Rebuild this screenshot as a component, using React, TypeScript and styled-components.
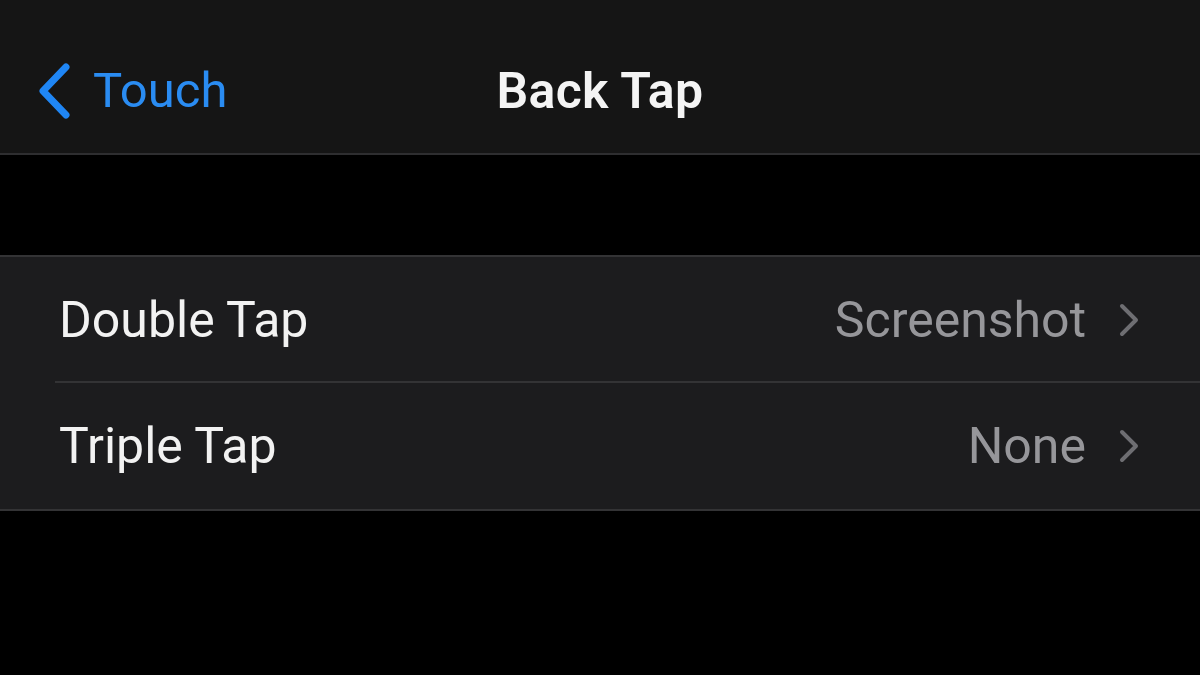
import React from "react";
import styled, { createGlobalStyle } from "styled-components";

const Global = createGlobalStyle`
  html, body { margin: 0; padding: 0; background: #000; }
  body { font-family: Roboto, "Liberation Sans", sans-serif; -webkit-font-smoothing: antialiased; }
`;

const Screen = styled.div`
  width: 1200px;
  height: 675px;
  background: #000;
  display: flex;
  flex-direction: column;
  overflow: hidden;
`;

const NavBar = styled.header`
  height: 155px;
  background: #151515;
  border-bottom: 2px solid #2e2e30;
  display: grid;
  grid-template-columns: 1fr auto 1fr;
  align-items: center;
  padding-top: 28px;
  box-sizing: border-box;
`;

const BackButton = styled.div`
  display: flex;
  align-items: center;
  gap: 22px;
  padding-left: 37px;
  color: #2a8cf2;
  font-size: 49px;
  font-weight: 400;
`;

const Title = styled.h1`
  margin: 0;
  color: #f4f4f4;
  font-size: 50px;
  font-weight: 600;
  letter-spacing: 0.3px;
`;

const Gap = styled.div`
  height: 100px;
  background: #000;
`;

const Group = styled.section`
  background: #1c1c1e;
  border-top: 2px solid #333335;
  border-bottom: 2px solid #333335;
`;

const Row = styled.div<{ $last?: boolean }>`
  height: 126px;
  display: flex;
  align-items: center;
  padding-left: 59px;
  padding-right: 60px;
  position: relative;
  box-sizing: border-box;
  ${(p) =>
    !p.$last &&
    `&::after {
      content: "";
      position: absolute;
      left: 55px;
      right: 0;
      bottom: 0;
      height: 2px;
      background: #333335;
    }`}
`;

const Label = styled.span`
  flex: 1;
  color: #f2f2f2;
  font-size: 50px;
  font-weight: 400;
`;

const Value = styled.span`
  color: #96969a;
  font-size: 50px;
  font-weight: 400;
  margin-right: 32px;
`;

const Chevron = ({ color, w, h, sw }: { color: string; w: number; h: number; sw: number }) => (
  <svg width={w} height={h} viewBox={`0 0 ${w} ${h}`} fill="none">
    <path
      d={`M${sw} ${sw} L${w - sw} ${h / 2} L${sw} ${h - sw}`}
      stroke={color}
      strokeWidth={sw}
      strokeLinecap="round"
      strokeLinejoin="round"
    />
  </svg>
);

const BackChevron = () => (
  <svg width="34" height="56" viewBox="0 0 34 56" fill="none">
    <path d="M29 4 L6 28 L29 52" stroke="#1f86f5" strokeWidth="7" strokeLinecap="round" strokeLinejoin="round" />
  </svg>
);

export default function App() {
  return (
    <Screen>
      <Global />
      <NavBar>
        <BackButton>
          <BackChevron />
          <span>Touch</span>
        </BackButton>
        <Title>Back Tap</Title>
        <div />
      </NavBar>
      <Gap />
      <Group>
        <Row>
          <Label>Double Tap</Label>
          <Value>Screenshot</Value>
          <Chevron color="#6e6e72" w={22} h={36} sw={4} />
        </Row>
        <Row $last>
          <Label>Triple Tap</Label>
          <Value>None</Value>
          <Chevron color="#6e6e72" w={22} h={36} sw={4} />
        </Row>
      </Group>
    </Screen>
  );
}
